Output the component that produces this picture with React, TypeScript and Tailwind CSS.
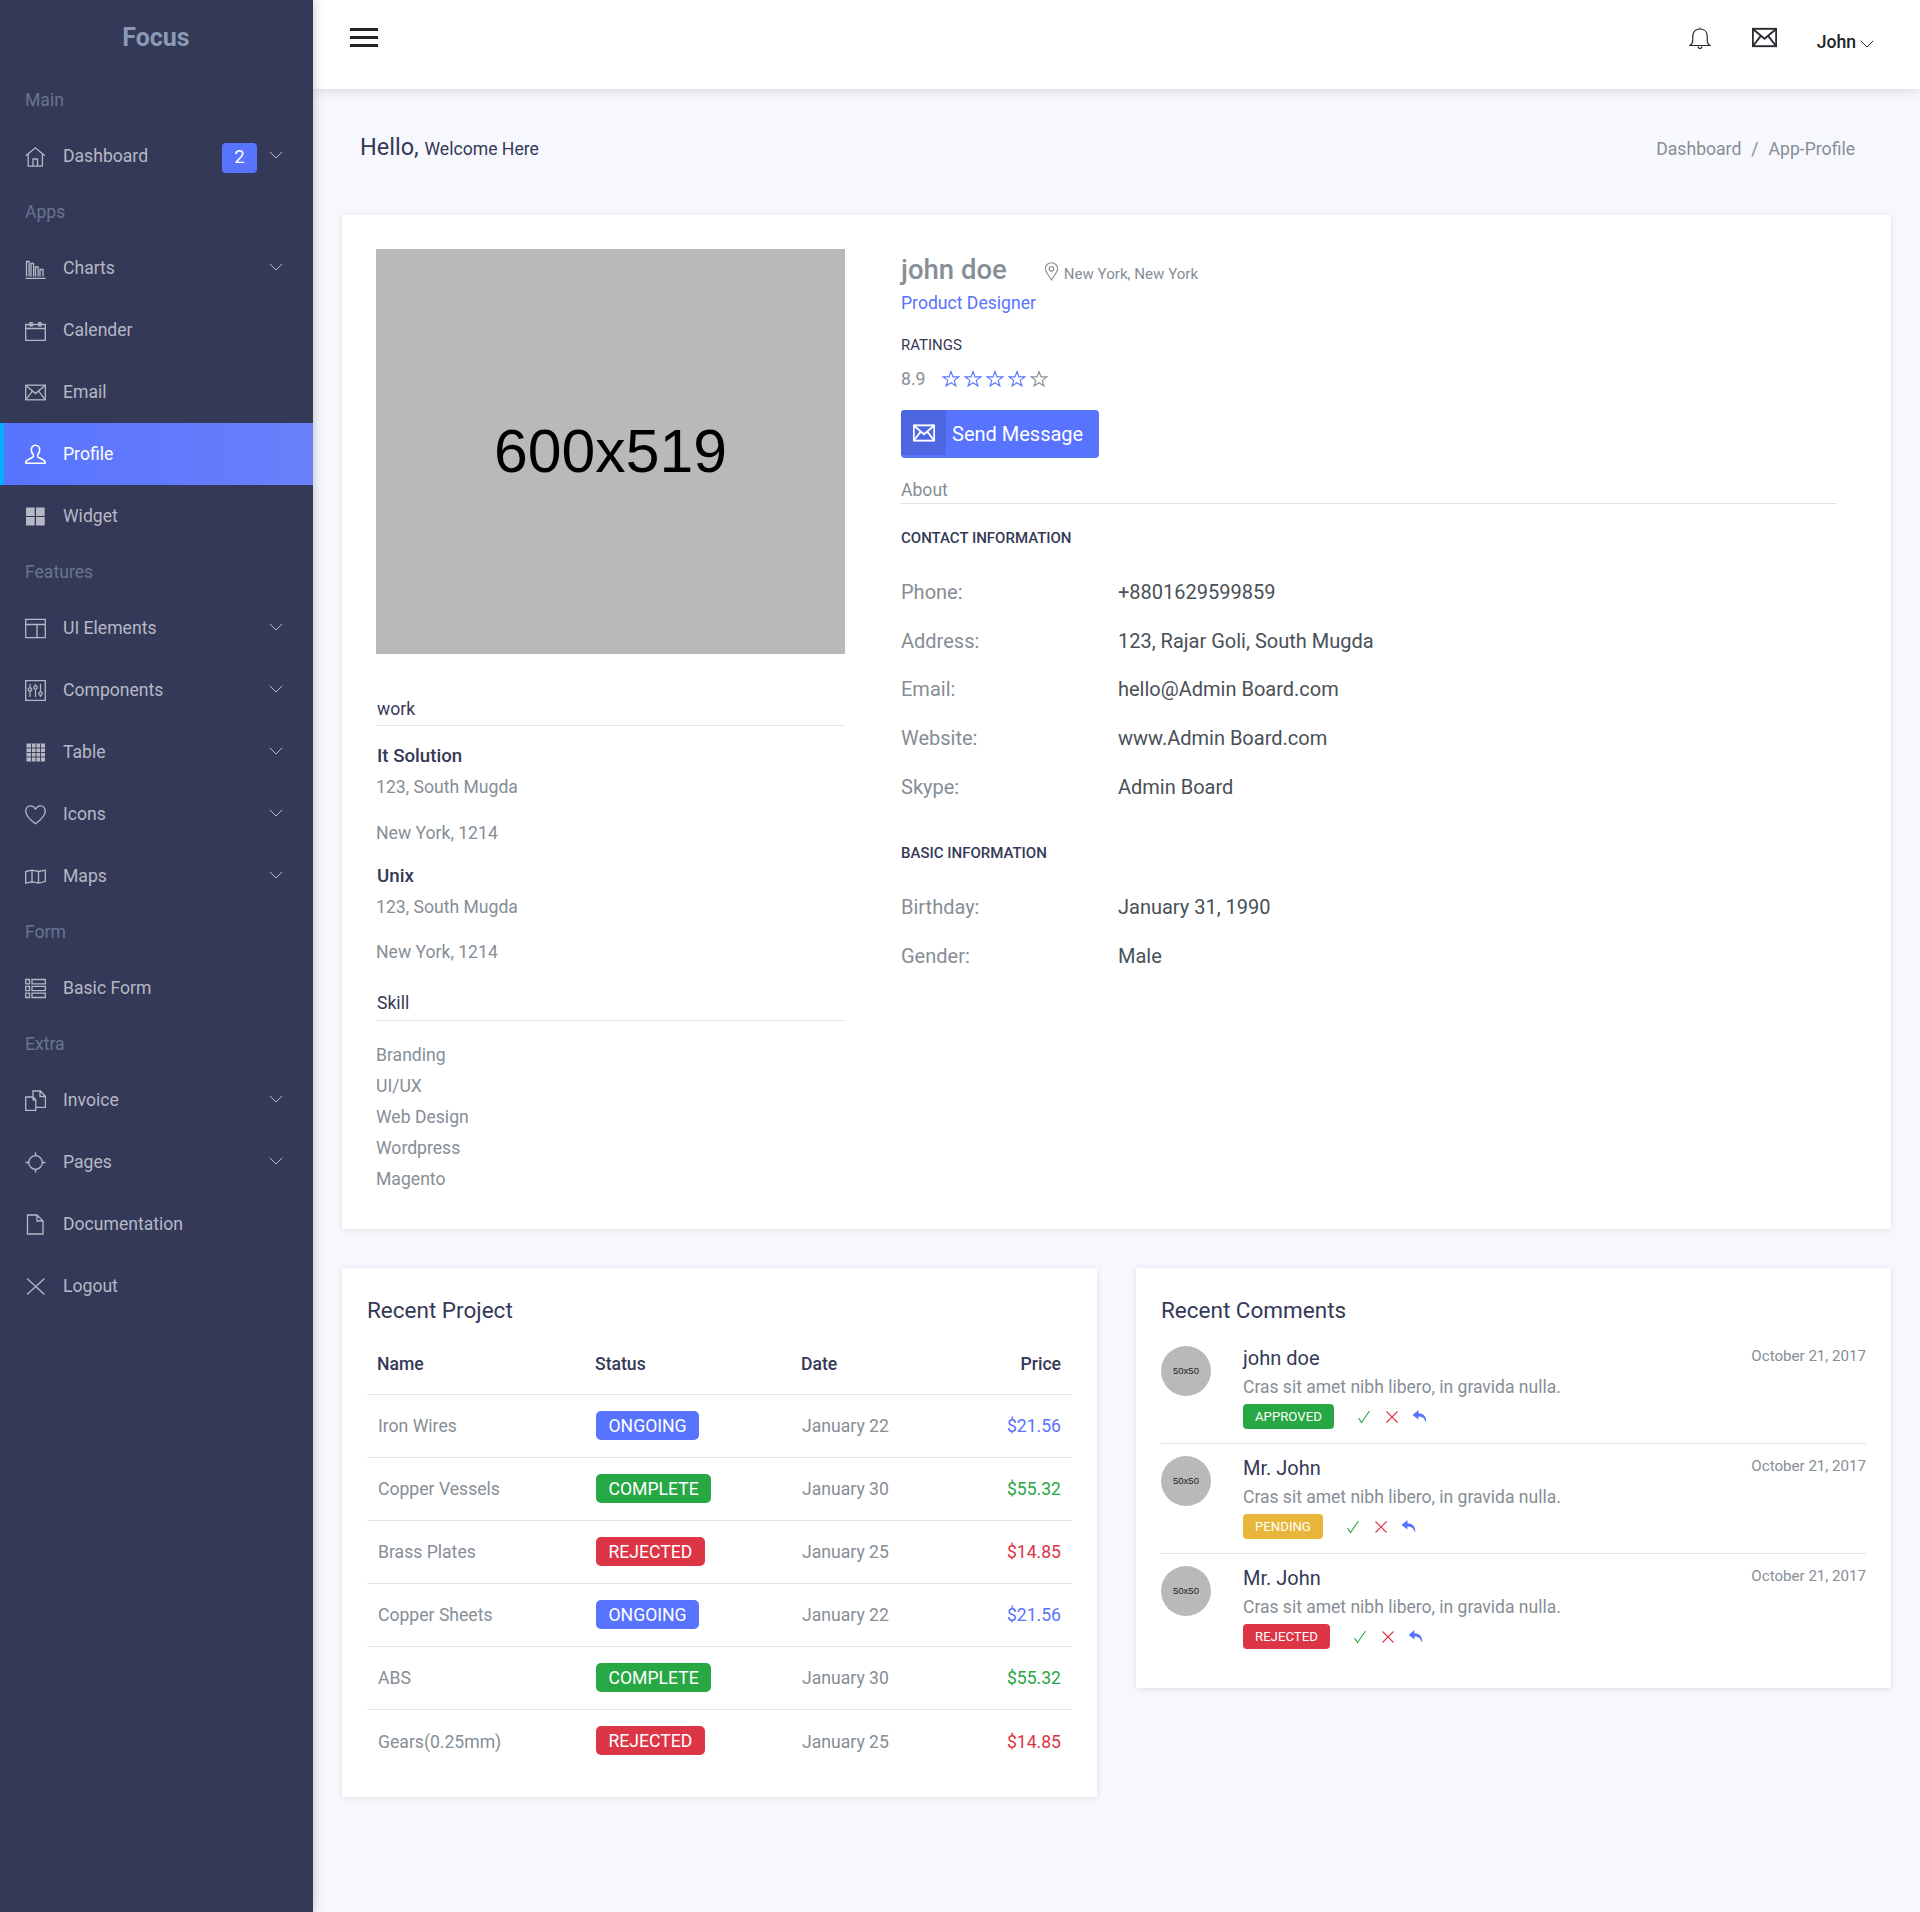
import type { ReactNode } from 'react';

const stroke = { fill: 'none', stroke: 'currentColor', strokeWidth: 1.3 };

function Ico({ children, className = 'w-[21px] h-[21px]' }: { children: ReactNode; className?: string }) {
  return (
    <svg viewBox="0 0 21 21" className={className} {...stroke}>
      {children}
    </svg>
  );
}

const MailIcon = ({ className }: { className?: string }) => (
  <Ico className={className}>
    <rect x="0.7" y="3.2" width="19.6" height="14.6" />
    <path d="M1 3.6l9.5 8 9.5-8M1 17.4l6.6-8.5M20 17.4l-6.6-8.5" />
  </Ico>
);

const icons: Record<string, ReactNode> = {
  home: <Ico><path d="M0.8 9.800L10.300 1.800l9.500 8M3.200 8.200v12h14.200v-12M8 20v-7h4.500v7" /></Ico>,
  chart: <Ico><path d="M0.600 20.400h20M1.500 18.500V3.500h2.600v15M6 18.500V5.500h2.600v13M10.500 18.500V9h2.600v9.500M15 18.500V11.500h3v7" /></Ico>,
  calendar: <Ico><path d="M0.700 4.500h19.600v16H0.700zM0.700 8.500h19.600M5 2.700h2.200v3.200H5zM13.800 2.700H16v3.200h-2.200z" /></Ico>,
  mail: <MailIcon />,
  user: (
    <Ico>
      <path d="M10.500 1.200c-2.600 0-4.200 2-4.200 4.600 0 2.300 1 3.900 2 5v2c0 .9-6.700 2.700-7.400 5v1.500h19.200v-1.500c-.7-2.300-7.400-4.100-7.400-5v-2c1-1.100 2-2.700 2-5 0-2.600-1.600-4.600-4.200-4.600z" strokeWidth="1.600" />
    </Ico>
  ),
  grid: (
    <svg viewBox="0 0 21 21" className="w-[21px] h-[21px]" fill="currentColor">
      <path d="M1 1.500h8.700v8.400H1zM11 1.500h8.700v8.400H11zM1 11h8.700v8.600H1zM11 11h8.700v8.600H11z" />
    </svg>
  ),
  layout: <Ico><path d="M0.700 1.300h19.600v18.400H0.700zM0.700 6.500h19.600M12 6.500v13.200" /></Ico>,
  panel: (
    <Ico>
      <path d="M0.700 0.700h19.600v19.600H0.700z" />
      <path d="M5 4v13M10.500 4v13M15.500 4v13" strokeWidth="1.200" />
      <circle cx="5" cy="9.500" r="1.700" fill="#343957" />
      <circle cx="10.500" cy="7.500" r="1.700" fill="#343957" />
      <circle cx="15.500" cy="13.500" r="1.700" fill="#343957" />
    </Ico>
  ),
  table: (
    <svg viewBox="0 0 21 21" className="w-[21px] h-[21px]" fill="currentColor">
      <path d="M1.500 1.500h18.500v18h-18.500z" />
      <path d="M1.500 6h18.500M1.500 10.500h18.500M1.500 15h18.500M6.500 1.500v18M11 1.500v18M15.500 1.500v18" stroke="#343957" strokeWidth="0.900" />
    </svg>
  ),
  heart: <Ico><path d="M10.500 19.800C6.500 16.800.8 12.500.8 7.200.8 3.800 3 1.800 5.400 1.800c2.300 0 4 1.200 5.100 3.200 1.100-2 2.800-3.200 5.100-3.200 2.400 0 4.600 2 4.600 5.400 0 5.300-5.700 9.600-9.700 12.600z" /></Ico>,
  map: <Ico><path d="M0.700 5.500l6.300-1.300 6.500 1.300 6.800-1.300v11.400l-6.800 1.500-6.500-1.500-6.300 1.500zM7 4.200v13M13.500 5.500v11.700" /></Ico>,
  form: <Ico><path d="M0.700 1.500h3.800v4.300H0.700zM7 1.500h13.300v4.300H7zM0.700 8.300h3.800v4.300H0.700zM7 8.300h13.300v4.300H7zM0.700 15.200h3.800v4.300H0.700zM7 15.200h13.300v4.300H7z" /></Ico>,
  docs: <Ico><path d="M0.700 7h7.300l2.800 2.800v10.500H0.700zM8 6.800V1h7.500l5 5.500v10.800h-9.500M15 1v5.500h5.500M8 7v2.800h2.800" /></Ico>,
  target: <Ico><circle cx="10.500" cy="10.500" r="6.800" /><path d="M0.500 10.500h3.500M17 10.500h3.500M10.500 0.500v3.500M10.500 17v3.500" strokeWidth="1.500" /></Ico>,
  doc: <Ico><path d="M2.500 1h9.500l6 6v13H2.500zM12 1v6h6" /></Ico>,
  close: <Ico><path d="M2 2.500l17.500 16M19.500 2.500L2 18.500" /></Ico>,
};

type NavEntry = { section: string } | { label: string; icon: string; arrow?: boolean; badge?: string; active?: boolean };

const nav: NavEntry[] = [
  { section: 'Main' },
  { label: 'Dashboard', icon: 'home', arrow: true, badge: '2' },
  { section: 'Apps' },
  { label: 'Charts', icon: 'chart', arrow: true },
  { label: 'Calender', icon: 'calendar' },
  { label: 'Email', icon: 'mail' },
  { label: 'Profile', icon: 'user', active: true },
  { label: 'Widget', icon: 'grid' },
  { section: 'Features' },
  { label: 'UI Elements', icon: 'layout', arrow: true },
  { label: 'Components', icon: 'panel', arrow: true },
  { label: 'Table', icon: 'table', arrow: true },
  { label: 'Icons', icon: 'heart', arrow: true },
  { label: 'Maps', icon: 'map', arrow: true },
  { section: 'Form' },
  { label: 'Basic Form', icon: 'form' },
  { section: 'Extra' },
  { label: 'Invoice', icon: 'docs', arrow: true },
  { label: 'Pages', icon: 'target', arrow: true },
  { label: 'Documentation', icon: 'doc' },
  { label: 'Logout', icon: 'close' },
];

const Chevron = ({ className = '' }: { className?: string }) => (
  <svg viewBox="0 0 14 8" className={`w-[14px] h-[8px] ${className}`} fill="none" stroke="currentColor" strokeWidth="1">
    <path d="M0.700 0.700L7 7l6.300-6.300" />
  </svg>
);

function Sidebar() {
  return (
    <aside className="w-[313px] shrink-0 bg-[#343957] shadow-[0_0_10px_rgba(0,0,0,0.25)] z-20">
      <div className="h-[75px] flex items-center justify-center text-[25px] font-bold text-[#8a9ab5] pr-[1px]">Focus</div>
      {nav.map((item) =>
        'section' in item ? (
          <div key={item.section} className="h-[50px] pl-[25px] flex items-center text-[17.600px] text-[#68758f]">
            {item.section}
          </div>
        ) : (
          <div
            key={item.label}
            className={
              item.active
                ? 'h-[62px] pl-[21px] pr-[30px] flex items-center border-l-[4px] border-[#00b0ff] bg-gradient-to-r from-[#5873fe] to-[#6a80fb] text-white'
                : 'h-[62px] pl-[25px] pr-[30px] flex items-center text-[#b6b8c6]'
            }
          >
            <span className="w-[38px] shrink-0 flex mt-[1px]">{icons[item.icon]}</span>
            <span className="text-[17.600px] flex-1">{item.label}</span>
            {item.badge && (
              <span className="w-[35px] h-[30px] mr-[12px] mt-[3px] rounded-[4px] bg-[#5873fe] text-white text-[18.500px] flex items-center justify-center">
                {item.badge}
              </span>
            )}
            {item.arrow && <Chevron className="text-[#b6b8c6] mb-[2px]" />}
          </div>
        ),
      )}
    </aside>
  );
}

function Header() {
  return (
    <header className="h-[89px] bg-white shadow-[0_2px_12px_rgba(0,0,0,0.12)] flex items-center pl-[37px] pr-[46px] relative z-10">
      <div className="flex flex-col gap-[5px] mb-[15px]">
        <span className="block w-[28px] h-[3px] bg-[#212529]" />
        <span className="block w-[28px] h-[3px] bg-[#212529]" />
        <span className="block w-[28px] h-[3px] bg-[#212529]" />
      </div>
      <div className="ml-auto flex items-center text-[#2a2a33]">
        <svg viewBox="0 0 22 22" className="w-[22px] h-[22px] mb-[13px] mr-[41px]" fill="none" stroke="currentColor" strokeWidth="1.200">
          <path d="M1 18.500c2-1.200 2.800-3 2.800-6V9c0-4.200 3-7 7.200-7s7.200 2.800 7.200 7v3.500c0 3 .8 4.800 2.800 6zM11 .5V2M9 19.500c.3 1.300 1 2 2 2s1.700-.7 2-2" />
        </svg>
        <MailIcon className="w-[25px] h-[25px] mb-[14px] mr-[40px] stroke-[1.600]" />
        <span className="text-[17.600px] font-medium text-[#212529] mb-[4px]">John</span>
        <Chevron className="ml-[4px] mb-[1px]" />
      </div>
    </header>
  );
}

const Star = ({ gray }: { gray?: boolean }) => (
  <svg viewBox="0 0 18 18" className={gray ? 'w-[18px] h-[18px] text-[#868e96]' : 'w-[18px] h-[18px] text-[#5873fe]'} fill="none" stroke="currentColor" strokeWidth="1.100">
    <path d="M9 1.500l2 5.400h5.800l-4.600 3.500 1.700 5.600L9 12.700 4.100 16l1.700-5.600L1.200 6.900H7z" />
  </svg>
);

function InfoRow({ label, value }: { label: string; value: string }) {
  return (
    <div className="flex h-[48.600px] items-center text-[20px]">
      <span className="w-[217px] text-[#868e96]">{label}</span>
      <span className="text-[#495057]">{value}</span>
    </div>
  );
}

function ProfileCard() {
  return (
    <section className="bg-white shadow-[0_1px_6px_rgba(0,0,0,0.1)] h-[1014px] p-[34px] flex">
      <div className="w-[469px] shrink-0">
        <div className="h-[405px] bg-[#b9b9b9] flex items-center justify-center text-[60.700px] text-black font-['Liberation_Sans',sans-serif]">
          600x519
        </div>
        <div className="mt-[42px] h-[30px] pl-[1px] border-b border-[#e6e6e6] text-[17.600px] text-[#343957]">work</div>
        <div className="mt-[16px] pl-[1px] text-[18.700px] h-[27px] font-medium text-[#343957]">It Solution</div>
        <div className="mt-[5px] h-[30px] text-[17.600px] text-[#868e96]">123, South Mugda</div>
        <div className="mt-[16px] h-[30px] text-[17.600px] text-[#868e96]">New York, 1214</div>
        <div className="mt-[12px] h-[27px] pl-[1px] text-[18.700px] font-medium text-[#343957]">Unix</div>
        <div className="mt-[5px] h-[30px] text-[17.600px] text-[#868e96]">123, South Mugda</div>
        <div className="mt-[15px] h-[30px] text-[17.600px] text-[#868e96]">New York, 1214</div>
        <div className="mt-[21px] h-[31px] pl-[1px] border-b border-[#e6e6e6] text-[17.600px] text-[#343957]">Skill</div>
        <div className="mt-[19px] flex flex-col text-[17.600px] leading-[31px] text-[#868e96]">
          <span>Branding</span>
          <span>UI/UX</span>
          <span>Web Design</span>
          <span>Wordpress</span>
          <span>Magento</span>
        </div>
      </div>
      <div className="ml-[56px] flex-1 mr-[20px]">
        <div className="flex items-baseline">
          <h2 className="text-[27.500px] leading-[42px] font-medium text-[#868e96]">john doe</h2>
          <svg viewBox="0 0 14 18" className="w-[15px] h-[19px] ml-[37px] mt-[2px] text-[#868e96] self-center" fill="none" stroke="currentColor" strokeWidth="1.100">
            <path d="M7 17C4.500 13 1.200 9.500 1.200 6.500a5.800 5.800 0 0 1 11.600 0C12.800 9.500 9.500 13 7 17z" />
            <circle cx="7" cy="6.500" r="2.200" />
          </svg>
          <span className="ml-[5px] text-[15.100px] text-[#868e96]">New York, New York</span>
        </div>
        <div className="text-[17.600px] leading-[26px] text-[#5873fe] mt-[-1px]">Product Designer</div>
        <div className="mt-[18px] text-[15px] leading-[22px] text-[#343957]">RATINGS</div>
        <div className="mt-[10px] h-[26px] flex items-center text-[17.600px] text-[#868e96]">
          <span className="mr-[17px]">8.9</span>
          <div className="flex gap-[4px]">
            <Star />
            <Star />
            <Star />
            <Star />
            <Star gray />
          </div>
        </div>
        <button className="mt-[18px] w-[198px] h-[48px] rounded-[4px] bg-[#5873fe] text-white text-[20px] flex overflow-hidden">
          <span className="w-[45px] h-[45px] bg-[#4d66e2] flex items-center justify-center">
            <MailIcon className="w-[22px] h-[22px] stroke-[1.800]" />
          </span>
          <span className="ml-[6px] self-center">Send Message</span>
        </button>
        <div className="mt-[19px] h-[27px] border-b border-[#e0e0e0] text-[17.600px] leading-[26px] text-[#868e96]">About</div>
        <div className="mt-[23px] text-[15px] leading-[22px] font-medium text-[#343957]">CONTACT INFORMATION</div>
        <div className="mt-[19px]">
          <InfoRow label="Phone:" value="+8801629599859" />
          <InfoRow label="Address:" value="123, Rajar Goli, South Mugda" />
          <InfoRow label="Email:" value="hello@Admin Board.com" />
          <InfoRow label="Website:" value="www.Admin Board.com" />
          <InfoRow label="Skype:" value="Admin Board" />
        </div>
        <div className="mt-[31px] text-[15px] leading-[22px] font-medium text-[#343957]">BASIC INFORMATION</div>
        <div className="mt-[19px]">
          <InfoRow label="Birthday:" value="January 31, 1990" />
          <InfoRow label="Gender:" value="Male" />
        </div>
      </div>
    </section>
  );
}

const projects = [
  { name: 'Iron Wires', status: 'ONGOING', date: 'January 22', price: '$21.56' },
  { name: 'Copper Vessels', status: 'COMPLETE', date: 'January 30', price: '$55.32' },
  { name: 'Brass Plates', status: 'REJECTED', date: 'January 25', price: '$14.85' },
  { name: 'Copper Sheets', status: 'ONGOING', date: 'January 22', price: '$21.56' },
  { name: 'ABS', status: 'COMPLETE', date: 'January 30', price: '$55.32' },
  { name: 'Gears(0.25mm)', status: 'REJECTED', date: 'January 25', price: '$14.85' },
];

const statusBg: Record<string, string> = {
  ONGOING: 'bg-[#5873fe]',
  COMPLETE: 'bg-[#28a745]',
  REJECTED: 'bg-[#dc3545]',
};
const priceText: Record<string, string> = {
  ONGOING: 'text-[#5873fe]',
  COMPLETE: 'text-[#28a745]',
  REJECTED: 'text-[#dc3545]',
};

function RecentProject() {
  return (
    <section className="bg-white shadow-[0_1px_6px_rgba(0,0,0,0.1)] h-[529px] w-[755px] pt-[24px] px-[25px]">
      <h3 className="text-[22.500px] leading-[36px] text-[#343957]">Recent Project</h3>
      <table className="w-full mt-[9px] text-[17.600px] border-collapse">
        <thead>
          <tr className="h-[57px] text-[#343957]">
            <th className="text-left font-medium pl-[10px] pb-[2px] w-[228px]">Name</th>
            <th className="text-left font-medium pb-[2px] w-[206px]">Status</th>
            <th className="text-left font-medium pb-[2px]">Date</th>
            <th className="text-right font-medium pr-[11px] pb-[2px]">Price</th>
          </tr>
        </thead>
        <tbody>
          {projects.map((p) => (
            <tr key={p.name} className="h-[63px] border-t border-[#e5e5e5] text-[#868e96]">
              <td className="pl-[11px] pt-[2px]">{p.name}</td>
              <td className="pl-[1px]">
                <span className={`inline-flex items-center h-[29px] px-[12.500px] pt-[1px] rounded-[5px] text-white ${statusBg[p.status]}`}>{p.status}</span>
              </td>
              <td className="pl-[1px] pt-[2px]">{p.date}</td>
              <td className={`text-right pr-[11px] pt-[2px] ${priceText[p.status]}`}>{p.price}</td>
            </tr>
          ))}
        </tbody>
      </table>
    </section>
  );
}

const comments = [
  { name: 'john doe', status: 'APPROVED', bg: 'bg-[#28a745]' },
  { name: 'Mr. John', status: 'PENDING', bg: 'bg-[#e7b63a]' },
  { name: 'Mr. John', status: 'REJECTED', bg: 'bg-[#dc3545]' },
];

function RecentComments() {
  return (
    <section className="bg-white shadow-[0_1px_6px_rgba(0,0,0,0.1)] h-[420px] w-[755px] pt-[24px] px-[25px]">
      <h3 className="text-[22.500px] leading-[36px] text-[#343957]">Recent Comments</h3>
      <div className="mt-[6px]">
        {comments.map((c, i) => (
          <div key={i} className={i < 2 ? 'flex h-[110px] pt-[12px] border-b border-[#e5e5e5]' : 'flex h-[110px] pt-[12px]'}>
            <div className="w-[50px] h-[50px] rounded-full bg-[#b9b9b9] flex items-center justify-center text-[9.500px] text-[#222] font-['Liberation_Sans',sans-serif]">
              50x50
            </div>
            <div className="ml-[32px] flex-1">
              <div className="flex justify-between">
                <span className="text-[20px] leading-[24px] text-[#343957]">{c.name}</span>
                <span className="text-[15.100px] leading-[20px] text-[#868e96]">October 21, 2017</span>
              </div>
              <div className="text-[17.500px] leading-[26px] mt-[4px] text-[#868e96]">Cras sit amet nibh libero, in gravida nulla.</div>
              <div className="flex items-center mt-[4px]">
                <span className={`h-[25px] px-[12px] pt-[1px] rounded-[4px] text-white text-[13.200px] flex items-center ${c.bg}`}>{c.status}</span>
                <svg viewBox="0 0 14 14" className="w-[14px] h-[14px] ml-[23px] text-[#28a745]" fill="none" stroke="currentColor" strokeWidth="1.100">
                  <path d="M1.500 8l3 4.500L12.500 1" />
                </svg>
                <svg viewBox="0 0 14 14" className="w-[14px] h-[14px] ml-[14px] text-[#dc3545]" fill="none" stroke="currentColor" strokeWidth="1.100">
                  <path d="M1.500 1.500l11 11M12.500 1.500l-11 11" />
                </svg>
                <svg viewBox="0 0 14 14" className="w-[15px] h-[15px] ml-[13px] text-[#5873fe]" fill="currentColor">
                  <path d="M6 1L0.500 5.500 6 9.800V7.100c3.200 0 5.200.9 6.300 3.900l.9 1.500c.5-5-2-8.400-7.200-8.600z" />
                </svg>
              </div>
            </div>
          </div>
        ))}
      </div>
    </section>
  );
}

export default function App() {
  return (
    <div className="flex min-h-screen bg-[#f7f8fe] font-['Roboto',sans-serif]">
      <Sidebar />
      <div className="flex-1">
        <Header />
        <div className="pl-[47px] pr-[45px] h-[126px] flex items-center justify-between pb-[8px]">
          <div className="text-[#343957] text-[23.500px]">
            <span>Hello, </span>
            <span className="text-[17.600px]">Welcome Here</span>
          </div>
          <div className="text-[17.600px] text-[#868e96] pr-[20px] mt-[3px]">
            Dashboard<span className="mx-[10px]">/</span>App-Profile
          </div>
        </div>
        <main className="px-[29px]">
          <ProfileCard />
          <div className="flex justify-between items-start mt-[39px]">
            <RecentProject />
            <RecentComments />
          </div>
        </main>
      </div>
    </div>
  );
}
